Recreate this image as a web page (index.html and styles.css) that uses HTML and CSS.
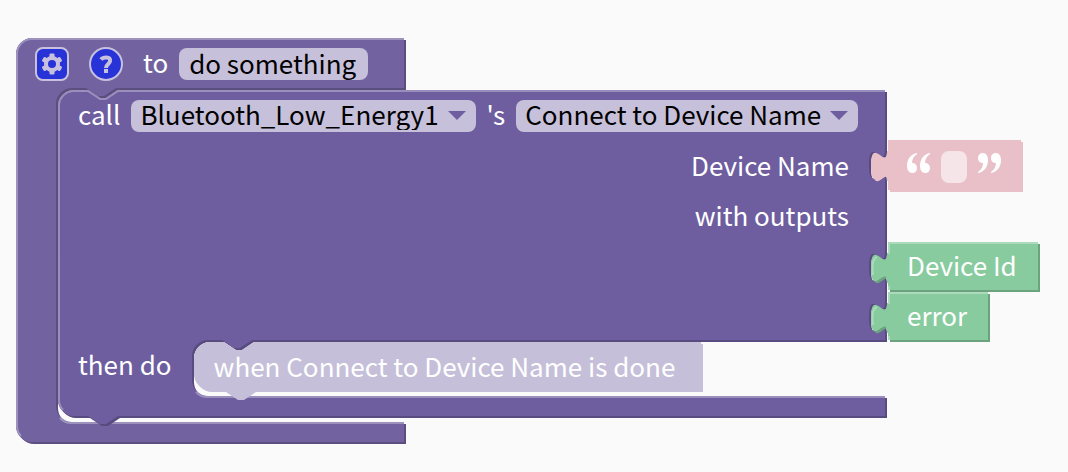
FILE: index.html
```html
<!DOCTYPE html>
<html lang="en">
<head>
<meta charset="utf-8">
<title>Block workspace</title>
<link rel="stylesheet" href="styles.css">
</head>
<body>
<main class="workspace">
  <svg class="shapes" width="1068" height="472" viewBox="0 0 1068 472" aria-hidden="true">
    <defs>
      <path id="procedure" d="M16,54 a16,16 0 0 1 16,-16 H404 V88 H116 l-12,8 h-6 l-12,-8 H72 a16,16 0 0 0 -16,16 V406 a16,16 0 0 0 16,16 H404 V442 H32 a16,16 0 0 1 -16,-16 z"/>
      <path id="call" d="M58,106 a16,16 0 0 1 16,-16 H88 l12,8 h6 l12,-8 H885 V150 c0,20 -16,-16 -16,15 s16,-5 16,15 V252 c0,20 -16,-16 -16,15 s16,-5 16,15 V302 c0,20 -16,-16 -16,15 s16,-5 16,15 V340 H252 l-12,8 h-6 l-12,-8 H208 a16,16 0 0 0 -16,16 V380 a16,16 0 0 0 16,16 H885 V416 H118 l-12,8 h-6 l-12,-8 H74 a16,16 0 0 1 -16,-16 z"/>
      <path id="done" d="M194,358 a16,16 0 0 1 16,-16 H224 l12,8 h6 l12,-8 H701 V390 H254 l-12,8 h-6 l-12,-8 H210 a16,16 0 0 1 -16,-16 z"/>
      <path id="text" d="M888,140 H1021 V190 H888 V181 H887 c0,-20 -16,16 -16,-15 s16,5 16,-15 H888 z"/>
      <path id="device" d="M888,242 H1038 V290 H888 V283 H887 c0,-20 -16,16 -16,-15 s16,5 16,-15 H888 z"/>
      <path id="error" d="M888,292 H988 V340 H888 V333 H887 c0,-20 -16,16 -16,-15 s16,5 16,-15 H888 z"/>
    </defs>
    <use class="procedure-shade" href="#procedure" x="2" y="2"/>
    <use class="procedure-fill" href="#procedure"/>
    <path class="procedure-edge" d="M21,436 A15,15 0 0 1 17,426 V54 A15,15 0 0 1 32,39 H404 M60,418 A15,15 0 0 0 72,423 H404"/>
    <use class="call-shade" href="#call" x="2" y="2"/>
    <use class="call-fill" href="#call"/>
    <path class="call-edge" d="M63,410 A15,15 0 0 1 59,400 V106 A15,15 0 0 1 74,91 H88 l12,8 h6 l12,-8 H885 M196,392 A15,15 0 0 0 208,397 H885"/>
    <use class="done-fill" href="#done" x="2" y="2"/>
    <use class="done-fill" href="#done"/>
    <use class="text-fill" href="#text" x="2" y="2"/>
    <use class="text-fill" href="#text"/>
    <use class="output-shade" href="#device" x="2" y="2"/>
    <use class="output-fill" href="#device"/>
    <path class="output-edge" d="M873,275 Q871,259 877,257 M889,290 V286 M889,254 V243 H1038"/>
    <use class="output-shade" href="#error" x="2" y="2"/>
    <use class="output-fill" href="#error"/>
    <path class="output-edge" d="M873,325 Q871,309 877,307 M889,340 V336 M889,304 V293 H988"/>
  </svg>

  <div class="content">
    <div class="row procedure-head">
      <button class="icon" type="button" aria-label="Block settings">
        <svg width="34" height="34" viewBox="0 0 34 34" aria-hidden="true">
          <rect class="icon-box" x="1" y="1" width="32" height="32" rx="7"/>
          <g class="gear"><rect x="14.500" y="6.500" width="5" height="21" rx="1"/><rect x="14.500" y="6.500" width="5" height="21" rx="1" transform="rotate(60 17 17)"/><rect x="14.500" y="6.500" width="5" height="21" rx="1" transform="rotate(120 17 17)"/><circle cx="17" cy="17" r="8"/></g>
          <circle class="gear-hole" cx="17" cy="17" r="4"/>
        </svg>
      </button>
      <button class="icon" type="button" aria-label="Help">
        <svg width="34" height="34" viewBox="0 0 34 34" aria-hidden="true">
          <circle class="icon-box" cx="17" cy="17" r="16"/>
          <path class="question" d="M12,12.500 C14,10 22,9 21,14 C21,17 17,17 17,21"/>
          <rect class="gear" x="15" y="22" width="4" height="4"/>
        </svg>
      </button>
      <label class="label" for="name">to</label>
      <span class="pill">
        <input class="field name" id="name" type="text" value="do something">
      </span>
    </div>

    <div class="call">
      <div class="row">
        <label class="label" for="component">call</label>
        <span class="pill">
          <select class="field picker" id="component"><option>Bluetooth_Low_Energy1</option></select>
          <svg class="arrow" width="18" height="10" viewBox="0 0 18 10" aria-hidden="true"><path d="M0,0 H18 L9,9 z"/></svg>
        </span>
        <label class="label possessive" for="method">'s</label>
        <span class="pill">
          <select class="field picker" id="method"><option>Connect to Device Name</option></select>
          <svg class="arrow" width="18" height="10" viewBox="0 0 18 10" aria-hidden="true"><path d="M0,0 H18 L9,9 z"/></svg>
        </span>
      </div>
      <div class="inputs">
        <label class="label input-label" for="device-name">Device Name</label>
        <span class="value text-value">
          <svg width="24" height="20" viewBox="0 0 24 20" aria-hidden="true"><g id="quote" class="quote"><path d="M10,0 C4,1 0,6 0,13 C0,17 2,20 5,20 C8,20 10,18 10,15 C10,12 8,10 5,10 C5,6 7,3 10,1 z"/><path d="M23,0 C17,1 13,6 13,13 C13,17 15,20 18,20 C21,20 23,18 23,15 C23,12 21,10 18,10 C18,6 20,3 23,1 z"/></g></svg>
          <input class="text-box" id="device-name" type="text">
          <svg width="24" height="20" viewBox="0 0 24 20" aria-hidden="true"><use href="#quote" transform="rotate(180 12 10)"/></svg>
        </span>
        <span class="label input-label">with outputs</span>
        <span class="label value device">Device Id</span>
        <span class="label value error">error</span>
      </div>
      <div class="row then">
        <span class="label">then do</span>
        <span class="placeholder">when Connect to Device Name is done</span>
      </div>
    </div>
  </div>
</main>
</body>
</html>
```
FILE: styles.css
```css
* { box-sizing: border-box; }

body {
  margin: 0;
  background: #fafafa;
  color: #fff;
  font: 400 26px/32px "Noto Sans CJK SC", "Open Sans", sans-serif;
}

.workspace {
  display: grid;
  min-height: 100vh;
  overflow: hidden;
}

.shapes, .content { grid-area: 1 / 1; }
.shapes { display: block; }
.content { position: relative; padding-top: 38px; white-space: nowrap; }

.procedure-fill { fill: #7263a0; }
.procedure-shade { fill: #5b4f80; }
.procedure-edge { stroke: #9c92bc; }
.call-fill { fill: #6e5e9f; }
.call-shade { fill: #584b7f; }
.call-edge { stroke: #9a8ebc; }
.done-fill { fill: #c5bfd9; }
.text-fill { fill: #e9c0c8; }
.output-fill { fill: #88cb9f; }
.output-shade { fill: #6da27f; }
.output-edge { stroke: #acdabc; }
.procedure-edge, .call-edge, .output-edge { fill: none; stroke-width: 2; }

.row { display: flex; align-items: center; height: 52px; }
.procedure-head { padding-left: 35px; }
.call { padding-left: 78px; }
.then { padding-bottom: 4px; }
.label { padding-bottom: 4px; }

.icon {
  display: block;
  width: 34px;
  height: 34px;
  margin-right: 20px;
  padding: 0;
  border: 0;
  background: none;
}
.icon svg { display: block; }
.icon-box { fill: #2833d7; stroke: #c7c1df; stroke-width: 2; }
.gear { fill: #c7c1df; }
.gear-hole { fill: #2833d7; }
.question { fill: none; stroke: #c7c1df; stroke-width: 4; }

.pill {
  display: grid;
  grid-template-rows: 32px;
  align-items: center;
  margin-left: 11px;
  border-radius: 8px;
  background: #c7c0da;
}
.field {
  grid-area: 1 / 1;
  height: 40px;
  margin: 0 0 4px;
  border: 0;
  padding: 0 10px;
  background: none;
  color: #000;
  font: inherit;
  appearance: none;
}
.name { width: 189px; }
.picker { padding: 0 37px 0 9px; }
.arrow {
  grid-area: 1 / 1;
  justify-self: end;
  margin-right: 10px;
  fill: #6e5e9f;
  pointer-events: none;
}
.possessive { margin-left: 10px; }

.inputs {
  display: grid;
  grid-template-columns: 771px 1fr;
  grid-auto-rows: 50px;
  align-items: center;
  column-gap: 58px;
}
.input-label { grid-column: 1; justify-self: end; }
.value { grid-column: 2; }
.device { grid-row: 3; }
.error { grid-row: 4; }
.text-value { display: flex; align-items: center; gap: 10px; }
.text-value svg { margin-bottom: 8px; }
.text-box {
  width: 26px;
  height: 32px;
  border: 0;
  border-radius: 8px;
  padding: 0 4px;
  background: #f5e5e8;
  color: #000;
  font: inherit;
}
.quote { fill: #fff; }
.placeholder { margin-left: 42px; }
```
